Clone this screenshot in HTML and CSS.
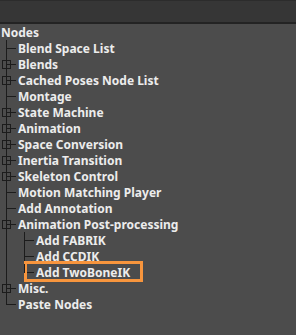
FILE: index.html
```html
<!DOCTYPE html>
<html>
<head>
    <title>Nodes</title>
    <link rel="stylesheet" href="styles.css">
</head>
<body>
    <div class="toolbar"></div>

    <ul class="tree">
        <li class="root">
            <span class="label">Nodes</span>
            <ul class="children">
                <li><span class="label">Blend Space List</span></li>
                <li><span class="toggle"></span><span class="label">Blends</span></li>
                <li><span class="toggle"></span><span class="label">Cached Poses Node List</span></li>
                <li><span class="label">Montage</span></li>
                <li><span class="toggle"></span><span class="label">State Machine</span></li>
                <li><span class="toggle"></span><span class="label">Animation</span></li>
                <li><span class="toggle"></span><span class="label">Space Conversion</span></li>
                <li><span class="toggle"></span><span class="label">Inertia Transition</span></li>
                <li><span class="toggle"></span><span class="label">Skeleton Control</span></li>
                <li><span class="label">Motion Matching Player</span></li>
                <li><span class="label">Add Annotation</span></li>
                <li>
                    <span class="toggle open"></span><span class="label">Animation Post-processing</span>
                    <ul class="children">
                        <li><span class="label">Add FABRIK</span></li>
                        <li><span class="label">Add CCDIK</span></li>
                        <li class="selected"><span class="label">Add TwoBoneIK</span></li>
                    </ul>
                </li>
                <li><span class="toggle"></span><span class="label">Misc.</span></li>
                <li><span class="label">Paste Nodes</span></li>
            </ul>
        </li>
    </ul>
</body>
</html>
```

FILE: styles.css
```css
html, body {
    margin: 0;
    height: 100%;
}

body {
    background-color: #4c4c4c;
    font-family: "Noto Sans", "DejaVu Sans", sans-serif;
    font-weight: bold;
    font-size: 12px;
    color: #ececec;
}

.toolbar {
    height: 24px;
    background: #363636;
    border-top: 1px solid #2c2c2c;
    border-bottom: 2px solid #232323;
    box-sizing: border-box;
}

.tree,
.children {
    list-style: none;
    margin: 0;
    padding: 0;
}

.tree .label {
    display: block;
    line-height: 18px;
    height: 16px;
    white-space: nowrap;
}

.root > .label {
    padding-left: 1px;
}

.children {
    padding-left: 18px;
}

.children > li {
    position: relative;
}

/* connector lines */
.children > li::before {
    content: "";
    position: absolute;
    left: -11px;
    top: 8px;
    width: 9px;
    height: 1px;
    background: #1c1c1c;
}

.children > li::after {
    content: "";
    position: absolute;
    left: -12px;
    top: 0;
    bottom: 0;
    width: 1px;
    background: #1c1c1c;
}

.children > li:last-child::after {
    bottom: auto;
    height: 9px;
}

.toggle {
    position: absolute;
    left: -16px;
    top: 4px;
    width: 9px;
    height: 9px;
    box-sizing: border-box;
    border: 1px solid #1c1c1c;
}

.selected > .label::after {
    content: "";
    position: absolute;
    left: -12px;
    top: -3px;
    width: 119px;
    height: 21px;
    box-sizing: border-box;
    border: 3px solid #f7953d;
}
```
